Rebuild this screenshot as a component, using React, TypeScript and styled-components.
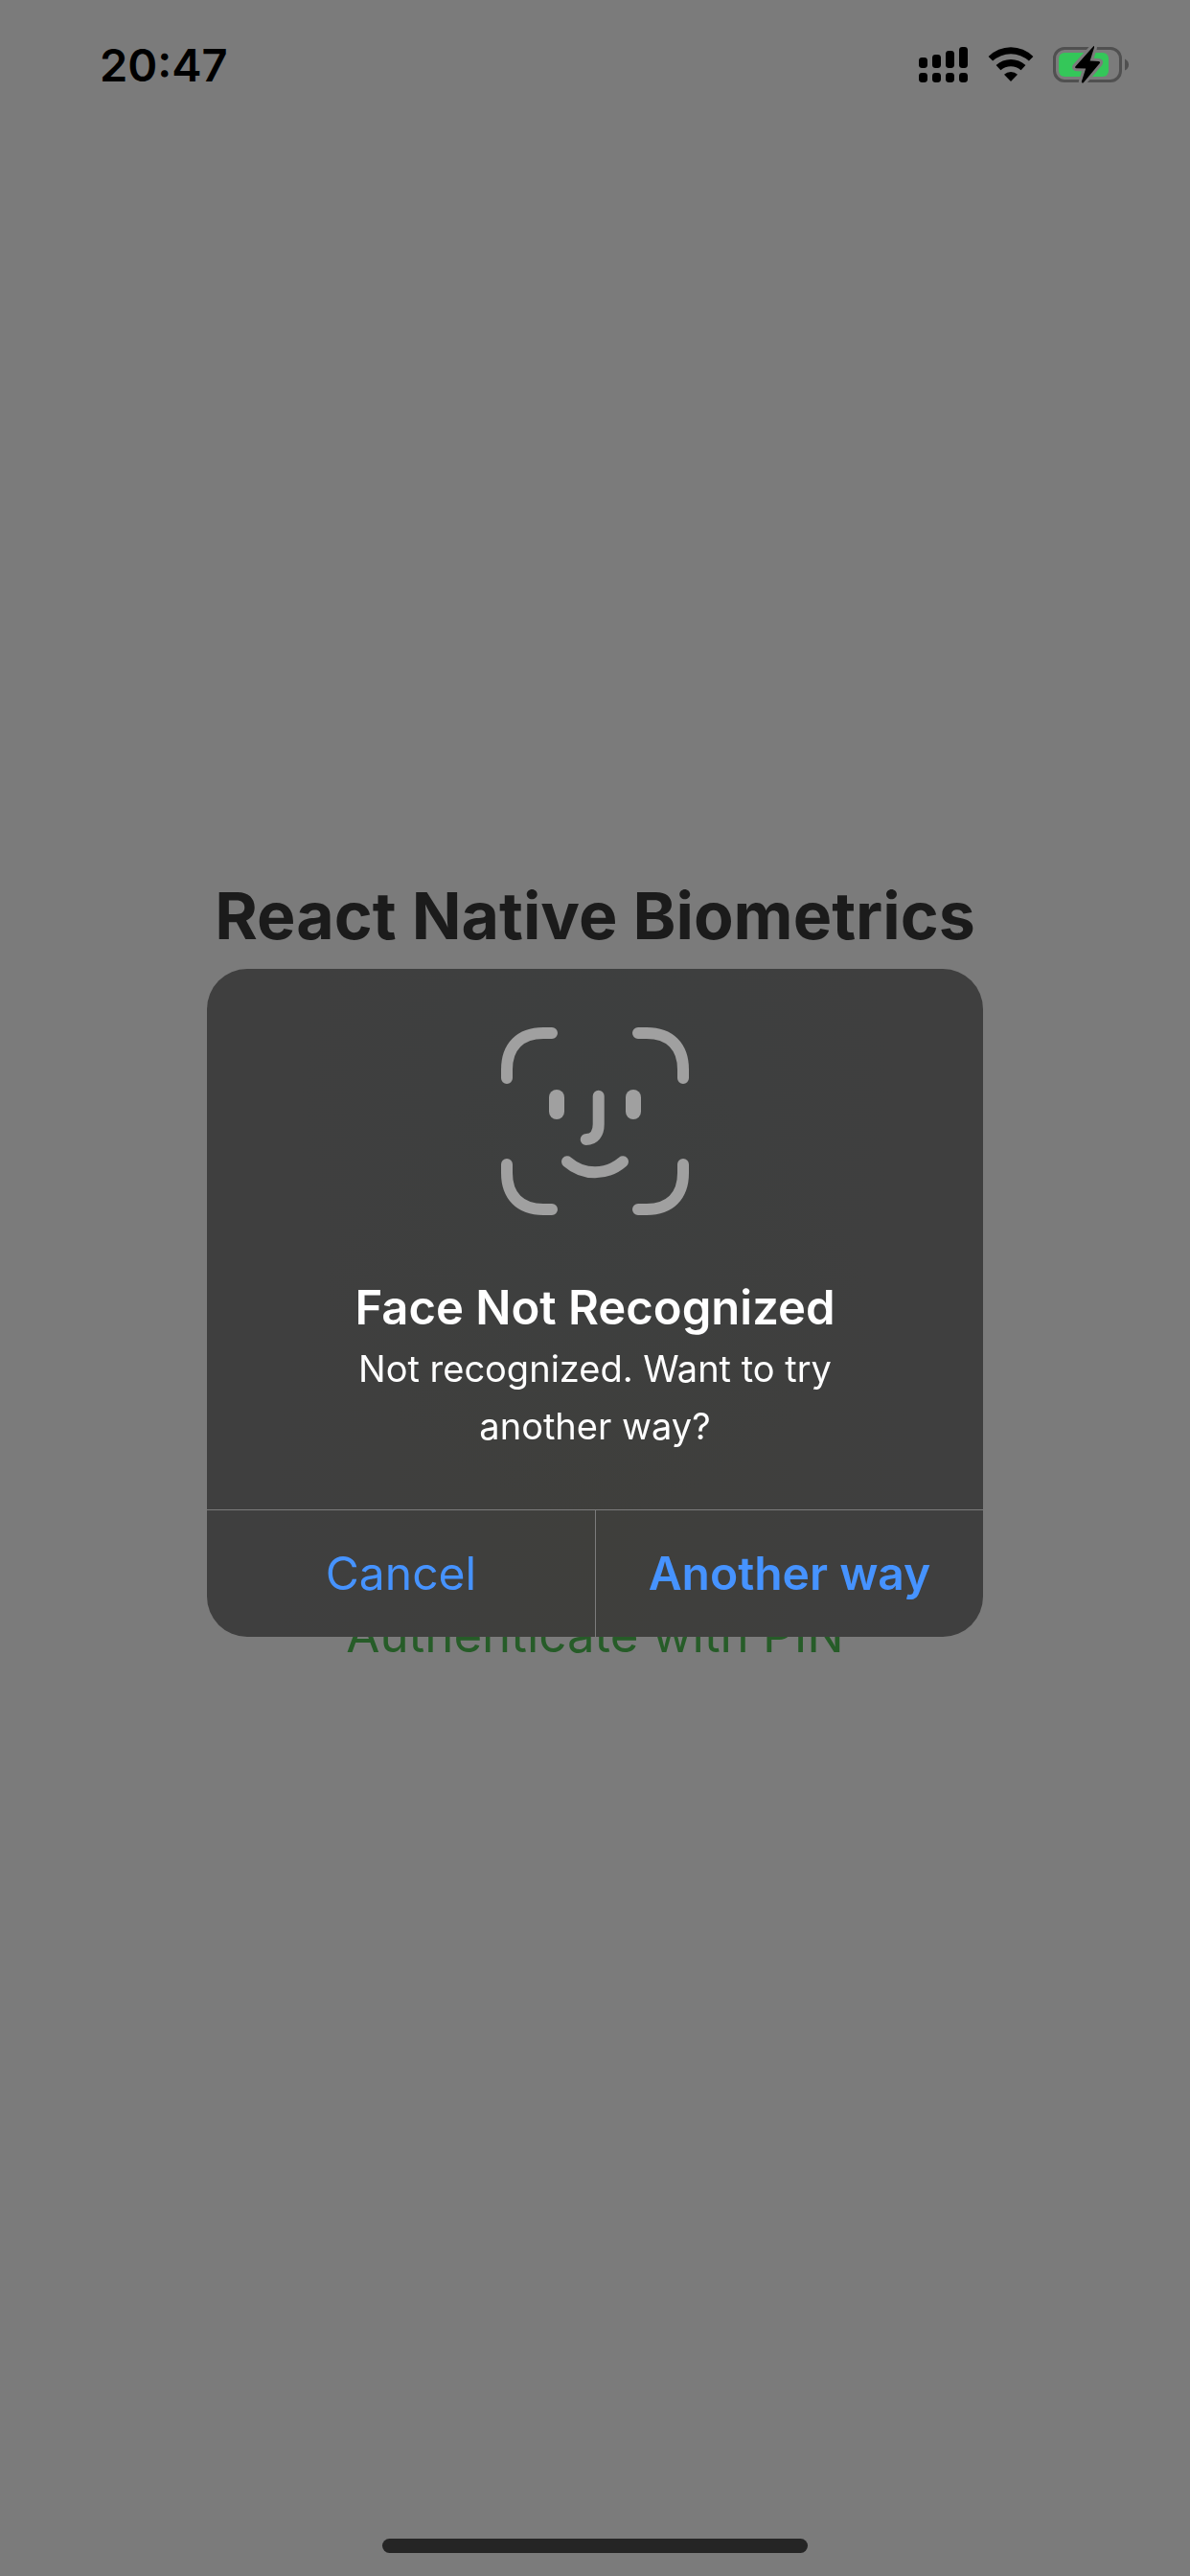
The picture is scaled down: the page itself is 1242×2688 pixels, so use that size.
import React from "react";
import styled, { createGlobalStyle } from "styled-components";

const GlobalStyle = createGlobalStyle`
  *, *::before, *::after { box-sizing: border-box; }
  body {
    margin: 0;
    background: #7b7b7b;
    font-family: Inter, "Liberation Sans", sans-serif;
  }
  h1, h2, p { margin: 0; }
`;

const Screen = styled.div`
  display: flex;
  flex-direction: column;
  min-height: 100vh;
  background: #7b7b7b;
`;

const StatusBar = styled.header`
  display: flex;
  align-items: center;
  justify-content: space-between;
  height: 132px;
  padding: 4px 64px 0 104px;
  color: #000;
`;

const Clock = styled.time`
  font-size: 47px;
  font-weight: 600;
  line-height: 56px;
`;

const StatusIcons = styled.div`
  display: flex;
  align-items: center;
  gap: 20px;
  padding-bottom: 2px;

  svg { display: block; }
`;

const Content = styled.main`
  flex: 1;
  display: flex;
  flex-direction: column;
  align-items: center;
  justify-content: center;
  gap: 676px;
`;

const Title = styled.h1`
  font-size: 68px;
  font-weight: 700;
  line-height: 86px;
  color: #1b1b1b;
`;

const LinkButton = styled.button`
  padding: 0 0 68px;
  border: 0;
  background: none;
  font: inherit;
  font-size: 51px;
  line-height: 64px;
  color: #265c28;
`;

const HomeArea = styled.footer`
  display: flex;
  justify-content: center;
  height: 102px;
  padding-top: 63px;
`;

const HomeIndicator = styled.div`
  width: 444px;
  height: 15px;
  border-radius: 8px;
  background: #252525;
`;

const Overlay = styled.div`
  position: fixed;
  inset: 0;
  display: flex;
  align-items: center;
  justify-content: center;
  padding: 132px 24px 102px;
`;

const Dialog = styled.section`
  width: 810px;
  max-width: 100%;
  overflow: hidden;
  border-radius: 42px;
  background:
    radial-gradient(ellipse at 50% 22%, #3d3f3f 0%, transparent 55%),
    radial-gradient(ellipse at 50% 85%, #3f3f3c 0%, transparent 60%),
    #3f3f3f;
`;

const DialogBody = styled.div`
  display: flex;
  flex-direction: column;
  align-items: center;
  padding: 61px 120px 57px;
  text-align: center;
  color: #fff;
`;

const DialogTitle = styled.h2`
  margin-top: 66px;
  font-size: 49px;
  font-weight: 600;
  line-height: 62px;
`;

const DialogText = styled.p`
  margin-top: 2px;
  font-size: 38px;
  line-height: 60px;
`;

const Actions = styled.div`
  display: grid;
  grid-template-columns: 1fr 1fr;
  border-top: 1px solid #7c7c7c;
`;

const Action = styled.button<{ $strong?: boolean }>`
  height: 132px;
  padding: 0;
  border: 0;
  border-left: ${(p) => (p.$strong ? "1px solid #7c7c7c" : "0")};
  background: none;
  font: inherit;
  font-size: 48px;
  font-weight: ${(p) => (p.$strong ? 600 : 400)};
  line-height: 62px;
  color: #4693ff;
`;

const signalTops = [12, 9, 5, 1];

const SignalIcon = () => (
  <svg width="52" height="38" viewBox="0 0 52 38" aria-hidden="true">
    {signalTops.map((top, i) => (
      <g key={top}>
        <rect x={i * 14} y={top} width="9" height={23 - top} rx="3.4" />
        <rect x={i * 14} y="28" width="9" height="10" rx="3.4" />
      </g>
    ))}
  </svg>
);

const WifiIcon = () => (
  <svg width="48" height="38" viewBox="0 0 48 38" aria-hidden="true">
    <path d="M.6 10.9A33 33 0 0 1 47.4 10.9L42.9 15.6A28 28 0 0 0 5.1 15.6Z" />
    <path d="M8.6 20A22.6 22.6 0 0 1 39.4 20L34.6 25.2A16.5 16.5 0 0 0 13.4 25.2Z" />
    <path d="M17 29.8A10 10 0 0 1 31 29.8L24 37Z" />
  </svg>
);

const boltPath = "M42.3 0.2L23.3 21.4Q22.6 23 24.4 23.2L34.2 23.4L29.8 37.2Q30.2 39.4 31.8 38.2L48.8 18Q49.8 16.2 47.6 15.9L38.6 15.6L42.9 2Q43.4 -.4 42.3 .2Z";

const BatteryIcon = () => (
  <svg width="79" height="40" viewBox="0 -1 79 40" aria-hidden="true">
    <rect x="1.5" y="2.5" width="69" height="34" rx="10.5" fill="none" stroke="#505050" strokeWidth="3" />
    <path d="M75 13.5Q79 15.5 79 19.5T75 25.5Z" fill="#505050" />
    <rect x="6" y="7" width="52" height="25" rx="6" fill="#34c759" />
    <path d={boltPath} fill="#7b7b7b" stroke="#7b7b7b" strokeWidth="6" strokeLinejoin="round" />
    <path d={boltPath} />
  </svg>
);

const FaceIcon = () => (
  <svg
    width="196"
    height="196"
    viewBox="0 0 196 196"
    fill="none"
    stroke="#a0a0a0"
    strokeWidth="12"
    strokeLinecap="round"
    aria-hidden="true"
  >
    <path d="M6 53V44C6 20 20 6 44 6H53" />
    <path d="M143 6H152C176 6 190 20 190 44V53" />
    <path d="M190 143V152C190 176 176 190 152 190H143" />
    <path d="M53 190H44C20 190 6 176 6 152V143" />
    <path d="M101.7 71.7V101C101.7 111 97 117 88.7 117" />
    <path d="M69 140.2C86 155 110 155 127 140.2" />
    <rect x="50" y="65" width="16" height="31" rx="8" fill="#a0a0a0" stroke="none" />
    <rect x="130" y="65" width="16" height="31" rx="8" fill="#a0a0a0" stroke="none" />
  </svg>
);

export default function App() {
  return (
    <>
      <GlobalStyle />
      <Screen>
        <StatusBar>
          <Clock>20:47</Clock>
          <StatusIcons>
            <SignalIcon />
            <WifiIcon />
            <BatteryIcon />
          </StatusIcons>
        </StatusBar>
        <Content>
          <Title>React Native Biometrics</Title>
          <LinkButton type="button">Authenticate with PIN</LinkButton>
        </Content>
        <HomeArea>
          <HomeIndicator />
        </HomeArea>
        <Overlay>
          <Dialog role="alertdialog" aria-modal="true" aria-labelledby="dialog-title" aria-describedby="dialog-text">
            <DialogBody>
              <FaceIcon />
              <DialogTitle id="dialog-title">Face Not Recognized</DialogTitle>
              <DialogText id="dialog-text">Not recognized. Want to try another way?</DialogText>
            </DialogBody>
            <Actions>
              <Action type="button">Cancel</Action>
              <Action type="button" $strong>Another way</Action>
            </Actions>
          </Dialog>
        </Overlay>
      </Screen>
    </>
  );
}
